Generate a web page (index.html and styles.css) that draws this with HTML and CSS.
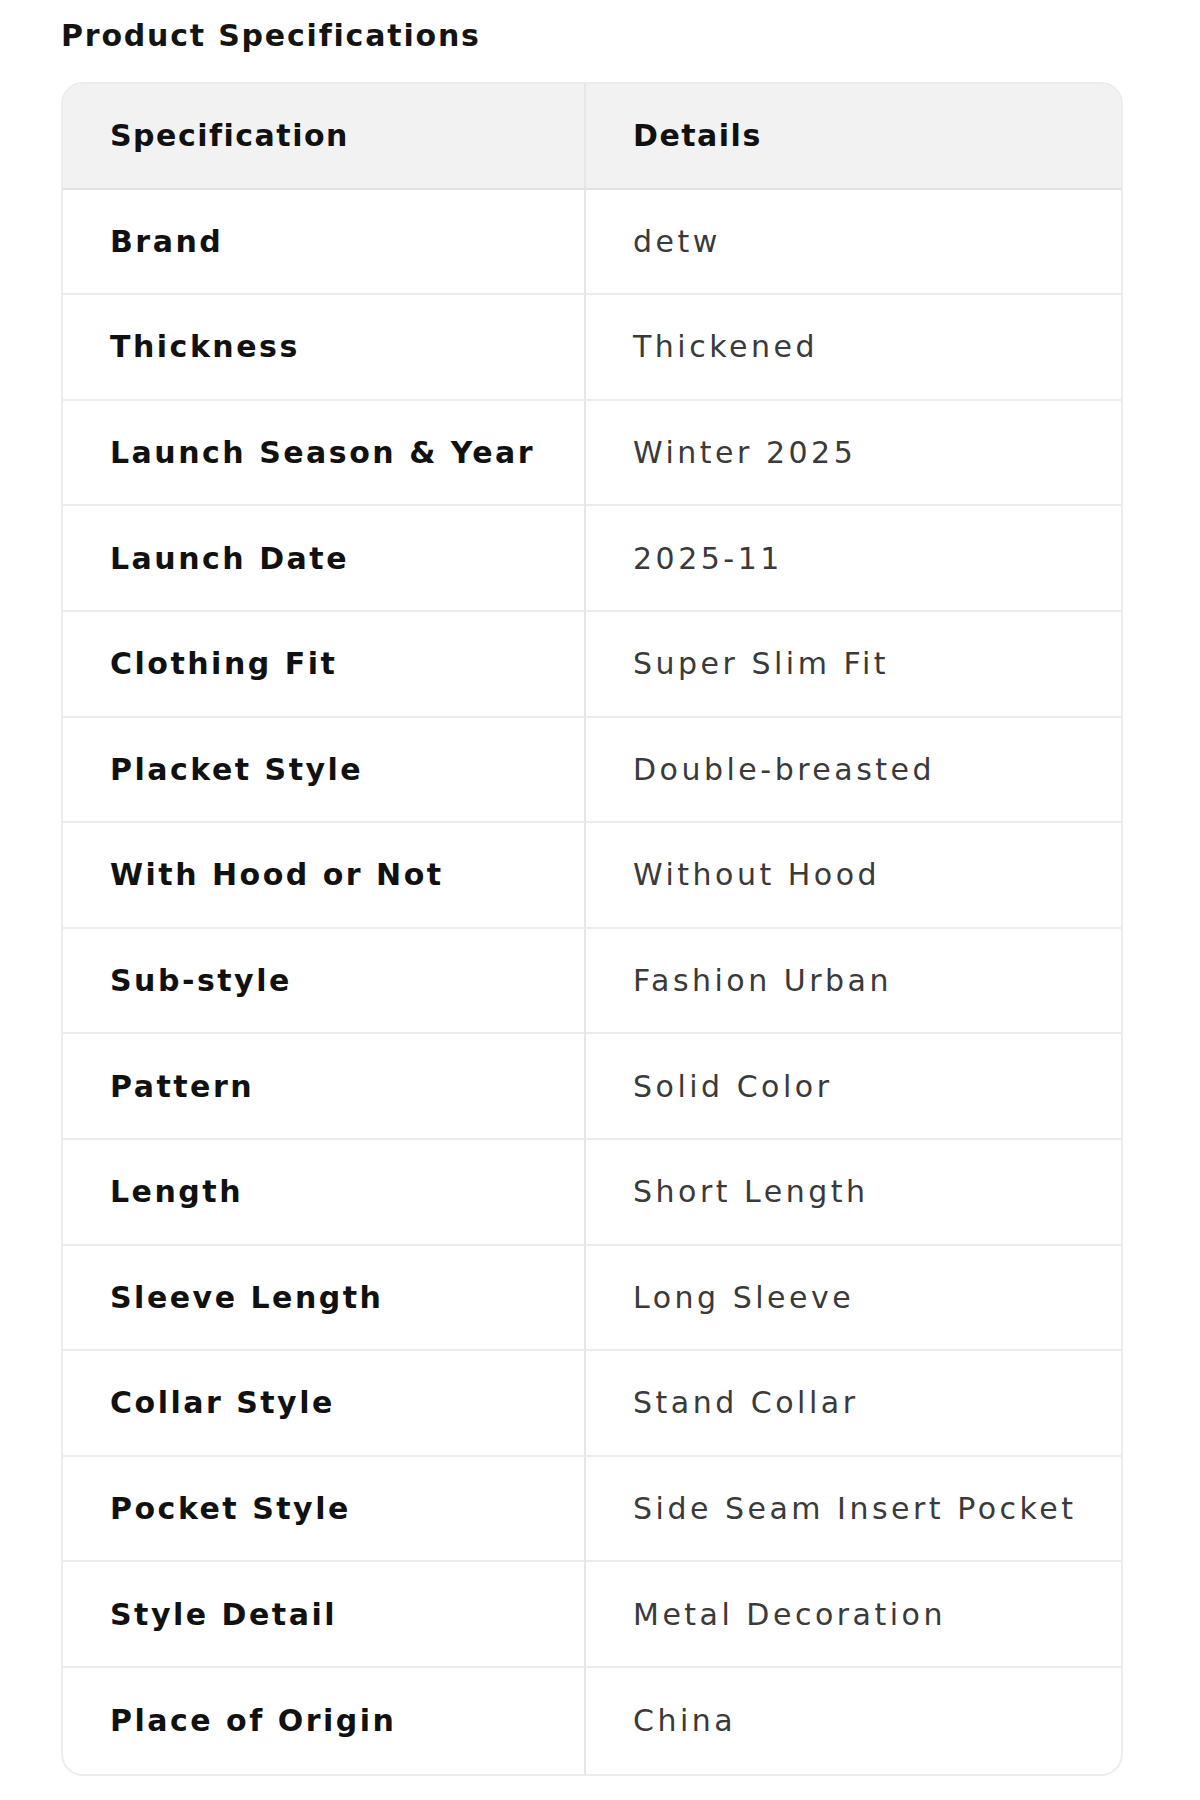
FILE: index.html
```html
<!DOCTYPE html>
<html lang="en">
<head>
<meta charset="utf-8">
<title>Product Specifications</title>
<link rel="stylesheet" href="styles.css">
</head>
<body>
<main class="page">
  <h2 class="title">Product Specifications</h2>
  <div class="spec-card">
    <table class="spec-table">
      <thead>
        <tr><th class="col-key">Specification</th><th class="col-val">Details</th></tr>
      </thead>
      <tbody>
        <tr><td class="key">Brand</td><td class="val">detw</td></tr>
        <tr><td class="key">Thickness</td><td class="val">Thickened</td></tr>
        <tr><td class="key">Launch Season &amp; Year</td><td class="val">Winter 2025</td></tr>
        <tr><td class="key">Launch Date</td><td class="val">2025-11</td></tr>
        <tr><td class="key">Clothing Fit</td><td class="val">Super Slim Fit</td></tr>
        <tr><td class="key">Placket Style</td><td class="val">Double-breasted</td></tr>
        <tr><td class="key">With Hood or Not</td><td class="val">Without Hood</td></tr>
        <tr><td class="key">Sub-style</td><td class="val">Fashion Urban</td></tr>
        <tr><td class="key">Pattern</td><td class="val">Solid Color</td></tr>
        <tr><td class="key">Length</td><td class="val">Short Length</td></tr>
        <tr><td class="key">Sleeve Length</td><td class="val">Long Sleeve</td></tr>
        <tr><td class="key">Collar Style</td><td class="val">Stand Collar</td></tr>
        <tr><td class="key">Pocket Style</td><td class="val">Side Seam Insert Pocket</td></tr>
        <tr><td class="key">Style Detail</td><td class="val">Metal Decoration</td></tr>
        <tr><td class="key">Place of Origin</td><td class="val">China</td></tr>
      </tbody>
    </table>
  </div>
</main>
</body>
</html>
```
FILE: styles.css
```css
html, body {
  margin: 0;
  padding: 0;
  background: #ffffff;
}

.page {
  padding: 12px 77px 0 61px;
  font-family: "DejaVu Sans", Verdana, sans-serif;
  color: #111111;
}

.title {
  margin: 0 0 22px 0;
  font-size: 30px;
  line-height: 48px;
  font-weight: bold;
  letter-spacing: 1.8px;
  color: #141414;
}

.spec-card {
  border: 2px solid #ececec;
  border-radius: 22px;
  overflow: hidden;
  width: 1058px;
}

.spec-table {
  width: 100%;
  border-collapse: separate;
  border-spacing: 0;
  font-size: 30px;
}

.spec-table tr {
  height: 105.6px;
}

.spec-table th,
.spec-table td {
  text-align: left;
  padding: 0 10px 0 47px;
  border-bottom: 2px solid #ececec;
  vertical-align: middle;
  white-space: nowrap;
}

.spec-table tbody tr:last-child td {
  border-bottom: none;
}

.spec-table th {
  background: #f2f2f2;
  font-weight: bold;
  letter-spacing: 1.5px;
  color: #111111;
  border-bottom-color: #e2e2e2;
}

.col-key,
.key {
  width: 523px;
  box-sizing: border-box;
  border-right: 2px solid #e6e6e6;
}

.key {
  font-weight: bold;
  letter-spacing: 2.5px;
  color: #111111;
}

.val {
  color: #3a3a3a;
  letter-spacing: 3.5px;
}

.col-val,
.val {
  padding-left: 50px;
}
```
